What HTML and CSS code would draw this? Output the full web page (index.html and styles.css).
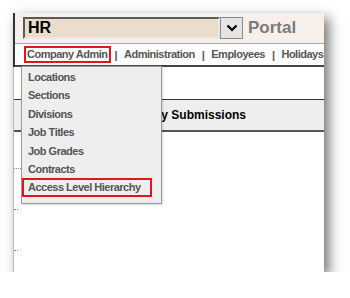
FILE: index.html
```html
<!DOCTYPE html>
<html lang="en">
<head>
    <meta charset="UTF-8">
    <title>HR Portal</title>
    <link rel="stylesheet" href="styles.css">
</head>
<body>
    <div class="window">
        <div class="top">
            <div class="header">
                <div class="select">
                    <span class="select-text">HR</span>
                    <span class="select-btn">
                        <svg width="12" height="8" viewBox="0 0 12 8"><polyline points="1.5,1.5 6,6 10.5,1.5" fill="none" stroke="#000" stroke-width="2.2"/></svg>
                    </span>
                </div>
                <span class="portal">Portal</span>
            </div>
            <nav class="menu-bar">
                <span class="menu-item active">Company Admin</span>
                <span class="sep">|</span>
                <span class="menu-item">Administration</span>
                <span class="sep">|</span>
                <span class="menu-item">Employees</span>
                <span class="sep">|</span>
                <span class="menu-item">Holidays</span>

                <ul class="dropdown">
                    <li>Locations</li>
                    <li>Sections</li>
                    <li>Divisions</li>
                    <li>Job Titles</li>
                    <li>Job Grades</li>
                    <li>Contracts</li>
                    <li class="selected">Access Level Hierarchy</li>
                </ul>
            </nav>
        </div>

        <div class="content">
            <div class="band">Pending Holiday Submissions</div>
            <div class="stubs">
                <span class="stub wide"></span>
                <span class="stub"></span>
                <span class="stub"></span>
            </div>
        </div>
    </div>
</body>
</html>
```

FILE: styles.css
```css
* {
    box-sizing: border-box;
    margin: 0;
    padding: 0;
}

body {
    background-color: #fff;
    font-family: "Liberation Sans", Arial, sans-serif;
    padding: 13px 0 0 13px;
}

.window {
    width: 311px;
    height: 259px;
    background-color: #fff;
    box-shadow: 5px 5px 12px rgba(0, 0, 0, 0.55);
    overflow: hidden;
    display: flex;
    flex-direction: column;
}

.top {
    border-left: 2px solid #333;
}

.header {
    height: 30px;
    background-color: #f7f0ea;
    display: flex;
    align-items: center;
    padding-left: 8px;
}

.select {
    display: flex;
    align-items: stretch;
    height: 22px;
}

.select-text {
    width: 197px;
    background-color: #ecdccb;
    border: 2px solid;
    border-color: #5a5a5a #e8e8e8 #e8e8e8 #5a5a5a;
    font-weight: bold;
    font-size: 16px;
    line-height: 18px;
    padding-left: 3px;
    color: #000;
}

.select-btn {
    width: 23px;
    background-color: #e4e4e4;
    border: 1px solid #8a8a8a;
    display: flex;
    align-items: center;
    justify-content: center;
}

.portal {
    margin-left: 5px;
    font-weight: bold;
    font-size: 17px;
    color: #7b7b7b;
}

.menu-bar {
    position: relative;
    height: 24px;
    border-top: 1px solid #a8a8a8;
    border-bottom: 2px solid #444;
    display: flex;
    align-items: center;
    gap: 4px;
    padding-left: 9px;
    font-size: 11px;
    font-weight: bold;
    letter-spacing: -0.5px;
    color: #555;
    white-space: nowrap;
}

.menu-item {
    border: 2px solid transparent;
    padding: 0 1px;
    line-height: 13px;
}

.menu-item.active {
    border-color: #e3141c;
}

.dropdown {
    position: absolute;
    left: 6px;
    top: calc(100% + 1px);
    width: 141px;
    height: 138px;
    padding-top: 1px;
    list-style: none;
    background-color: #eee;
    border: 1px solid #999;
    box-shadow: 1px 1px 2px rgba(0, 0, 0, 0.15);
}

.dropdown li {
    width: fit-content;
    border: 2px solid transparent;
    padding: 0 9px 0 4px;
    line-height: 14.4px;
}

.dropdown li.selected {
    border-color: #e3141c;
}

.content {
    flex: 1;
    border-left: 1px solid #bbb;
    padding-top: 32px;
}

.band {
    height: 33px;
    background-color: #eee;
    border-top: 1px solid #333;
    border-bottom: 2px solid #555;
    font-size: 12px;
    font-weight: bold;
    color: #000;
    line-height: 30px;
    padding-left: 60px;
    white-space: nowrap;
}

.stubs {
    display: flex;
    flex-direction: column;
    align-items: flex-start;
    padding-top: 36px;
    gap: 40px;
}

.stub {
    width: 4px;
    border-top: 1px dotted #888;
}

.stub.wide {
    width: 7px;
}
```
